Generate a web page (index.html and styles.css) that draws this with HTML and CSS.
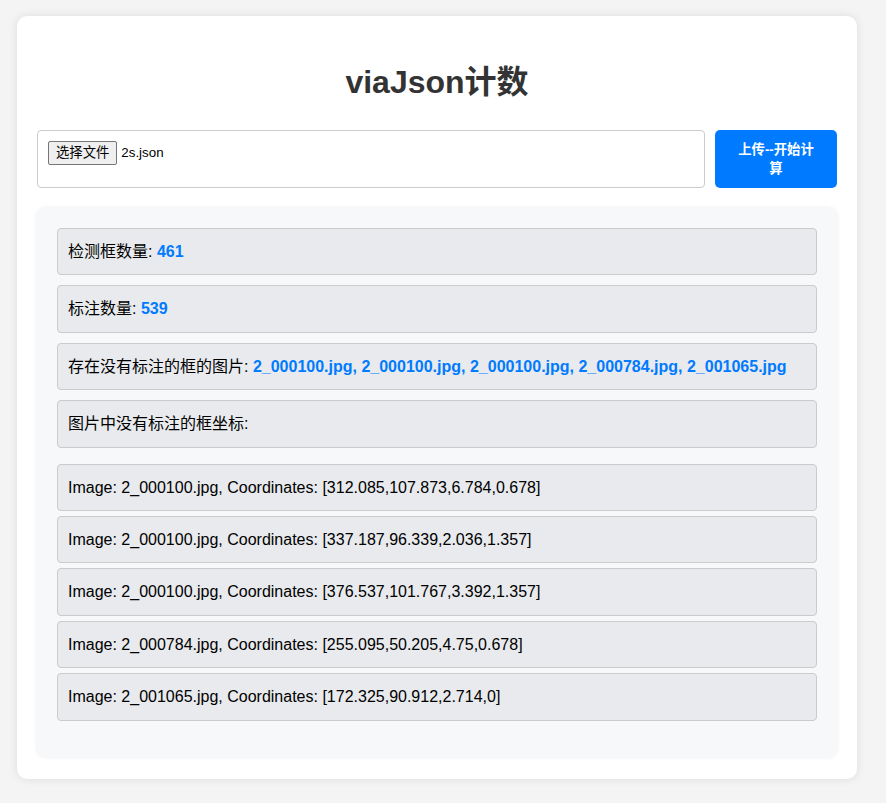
FILE: index.html
```html
<!DOCTYPE html>
<html lang="zh-CN">
<head>
    <meta charset="UTF-8">
    <meta name="viewport" content="width=device-width, initial-scale=1.0">
    <title>viaJson计数</title>
    <link rel="stylesheet" href="styles.css">
</head>
<body>
    <div class="container">
        <h1>viaJson计数</h1>

        <div class="upload-row">
            <div class="file-box">
                <span class="file-btn">选择文件</span>
                <span class="file-name">2s.json</span>
            </div>
            <button class="upload-btn">上传--开始计算</button>
        </div>

        <div class="result">
            <div class="item">检测框数量: <span class="value">461</span></div>
            <div class="item">标注数量: <span class="value">539</span></div>
            <div class="item">存在没有标注的框的图片: <span class="value">2_000100.jpg, 2_000100.jpg, 2_000100.jpg, 2_000784.jpg, 2_001065.jpg</span></div>
            <div class="item">图片中没有标注的框坐标:</div>

            <ul class="coords">
                <li>Image: 2_000100.jpg, Coordinates: [312.085,107.873,6.784,0.678]</li>
                <li>Image: 2_000100.jpg, Coordinates: [337.187,96.339,2.036,1.357]</li>
                <li>Image: 2_000100.jpg, Coordinates: [376.537,101.767,3.392,1.357]</li>
                <li>Image: 2_000784.jpg, Coordinates: [255.095,50.205,4.75,0.678]</li>
                <li>Image: 2_001065.jpg, Coordinates: [172.325,90.912,2.714,0]</li>
            </ul>
        </div>
    </div>
</body>
</html>
```

FILE: styles.css
```css
*{
    box-sizing: border-box;
}
body{
    margin: 0;
    padding: 16px 17px;
    background: #f4f4f4;
    font-family: "Liberation Sans", "Noto Sans CJK SC", sans-serif;
    color: #000;
}
.container{
    width: 840px;
    padding: 20px 20px 22px;
    background: #fff;
    border-radius: 10px;
    box-shadow: 0 0 10px rgba(0, 0, 0, 0.1);
}
.container h1{
    margin: 26px 0 28px;
    text-align: center;
    font-size: 32px;
    line-height: 40px;
    color: #333;
}
.upload-row{
    display: flex;
    gap: 10px;
}
.file-box{
    flex: 1;
    display: flex;
    align-items: flex-start;
    gap: 4px;
    height: 58px;
    padding: 10px;
    border: 1px solid #ccc;
    border-radius: 4px;
    font-size: 13.33px;
}
.file-btn{
    padding: 0 7px;
    height: 24px;
    line-height: 22px;
    background: #efefef;
    border: 1px solid #767676;
    border-radius: 2px;
}
.file-name{
    line-height: 24px;
}
.upload-btn{
    width: 122px;
    padding: 10px 20px;
    background: #007bff;
    color: #fff;
    border: none;
    border-radius: 5px;
    font-family: inherit;
    font-size: 13.33px;
    font-weight: bold;
    line-height: 19px;
}
.result{
    margin-top: 20px;
    padding: 20px;
    background: #f7f8fa;
    border-radius: 8px;
    box-shadow: 0 0 4px rgba(0, 0, 0, 0.08);
}
.item,
.coords li{
    padding: 10px;
    background: #e8eaed;
    border: 1px solid #cbcbcb;
    border-radius: 4px;
    font-size: 16px;
    line-height: 25.4px;
}
.item{
    margin-bottom: 10px;
}
.value{
    color: #007bff;
    font-weight: bold;
}
.coords{
    list-style: none;
    margin: 16px 0;
    padding: 0;
}
.coords li{
    margin: 5px 0;
}
```
